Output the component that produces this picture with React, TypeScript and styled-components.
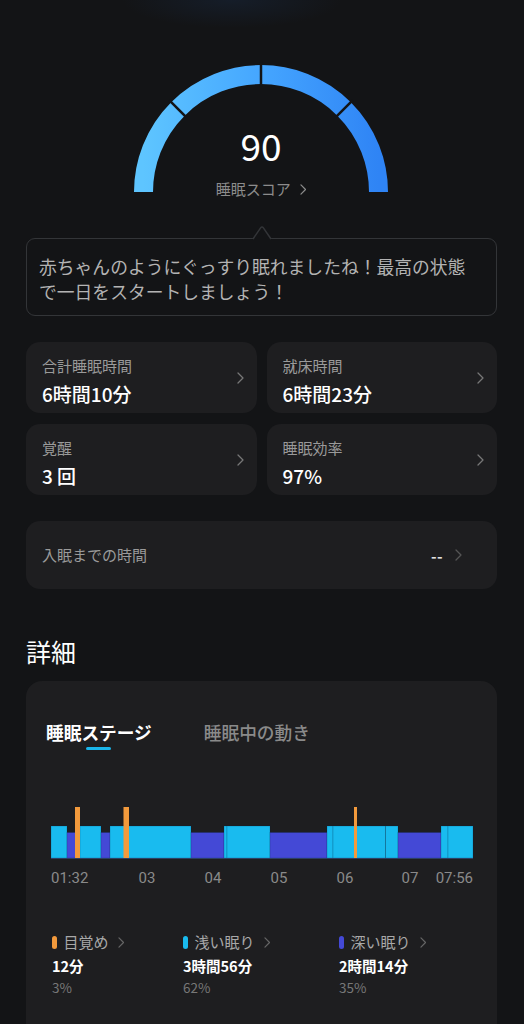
import styled, { createGlobalStyle } from "styled-components";

const GlobalStyle = createGlobalStyle`
  body {
    margin: 0;
    background: #131416;
    font-family: "Noto Sans CJK JP", "Noto Sans", sans-serif;
    color: #fff;
  }
`;

const BG = "#131416";

type Stage = "light" | "deep";

const stageColor: Record<Stage, string> = {
  light: "#19bbef",
  deep: "#4449d6",
};

// x positions in page px, chart runs 51 -> 473
const segments: { from: number; to: number; type: Stage }[] = [
  { from: 51, to: 67, type: "light" },
  { from: 67, to: 80, type: "deep" },
  { from: 80, to: 101, type: "light" },
  { from: 101, to: 110, type: "deep" },
  { from: 110, to: 191, type: "light" },
  { from: 191, to: 224, type: "deep" },
  { from: 224, to: 227, type: "light" },
  { from: 227, to: 270, type: "light" },
  { from: 270, to: 327, type: "deep" },
  { from: 327, to: 333, type: "light" },
  { from: 333, to: 385.5, type: "light" },
  { from: 385.5, to: 398, type: "light" },
  { from: 398, to: 441, type: "deep" },
  { from: 441, to: 448, type: "light" },
  { from: 448, to: 473, type: "light" },
];

const wakes = [
  { x: 75, w: 5 },
  { x: 123.5, w: 5.5 },
  { x: 354, w: 3 },
];

const ticks = [
  { x: 51, label: "01:32", anchor: "start" },
  { x: 147, label: "03", anchor: "middle" },
  { x: 213, label: "04", anchor: "middle" },
  { x: 279, label: "05", anchor: "middle" },
  { x: 345, label: "06", anchor: "middle" },
  { x: 410, label: "07", anchor: "middle" },
  { x: 473, label: "07:56", anchor: "end" },
];

const stats = [
  { label: "合計睡眠時間", value: "6時間10分" },
  { label: "就床時間", value: "6時間23分" },
  { label: "覚醒", value: "3 回" },
  { label: "睡眠効率", value: "97%" },
];

const legend = [
  { color: "#f39a3c", label: "目覚め", value: "12分", pct: "3%" },
  { color: "#19bbef", label: "浅い眠り", value: "3時間56分", pct: "62%" },
  { color: "#4449d6", label: "深い眠り", value: "2時間14分", pct: "35%" },
];

function Chevron({ color = "#777", size = 12 }: { color?: string; size?: number }) {
  return (
    <svg width={size / 2 + 1} height={size} viewBox="0 0 7 12" fill="none">
      <polyline points="1,1 6,6 1,11" stroke={color} strokeWidth="1.3" strokeLinecap="round" strokeLinejoin="round" />
    </svg>
  );
}

function Gauge() {
  const cx = 130;
  const cy = 132;
  const r = 117.5;
  const dividers = [135, 90, 45].map((deg) => {
    const a = (deg * Math.PI) / 180;
    return {
      x1: cx + (r - 12) * Math.cos(a),
      y1: cy - (r - 12) * Math.sin(a),
      x2: cx + (r + 12) * Math.cos(a),
      y2: cy - (r + 12) * Math.sin(a),
    };
  });
  return (
    <GaugeBox>
      <svg width="260" height="134" viewBox="0 0 260 134">
        <defs>
          <linearGradient id="gaugeGrad" x1="0" y1="0" x2="1" y2="0">
            <stop offset="0" stopColor="#5ec5ff" />
            <stop offset="0.5" stopColor="#45a6ff" />
            <stop offset="1" stopColor="#2f84f5" />
          </linearGradient>
        </defs>
        <path
          d={`M ${cx - r} ${cy} A ${r} ${r} 0 0 1 ${cx + r} ${cy}`}
          stroke="url(#gaugeGrad)"
          strokeWidth="19"
          fill="none"
        />
        {dividers.map((d, i) => (
          <line key={i} {...d} stroke={BG} strokeWidth="2.5" />
        ))}
      </svg>
      <ScoreValue>90</ScoreValue>
      <ScoreLabel>
        睡眠スコア
        <Chevron color="#8c8c8c" size={11} />
      </ScoreLabel>
    </GaugeBox>
  );
}

export default function App() {
  return (
    <>
      <GlobalStyle />
      <Page>
        <Gauge />

        <Bubble>
          <BubbleArrow width="20" height="14" viewBox="0 0 20 14">
            <polygon points="0,14 8.3,2 10,0 11.7,2 20,14" fill={BG} />
            <path d="M1 13 L8.6 1.9 Q10 0 11.4 1.9 L19 13" stroke="#333538" strokeWidth="1.5" fill={BG} />
          </BubbleArrow>
          赤ちゃんのようにぐっすり眠れましたね！最高の状態
          <br />
          で一日をスタートしましょう！
        </Bubble>

        <StatGrid>
          {stats.map((s) => (
            <StatCard key={s.label}>
              <StatText>
                <StatLabel>{s.label}</StatLabel>
                <StatValue>{s.value}</StatValue>
              </StatText>
              <Chevron />
            </StatCard>
          ))}
        </StatGrid>

        <RowCard>
          <StatLabel>入眠までの時間</StatLabel>
          <RowRight>
            <Dashes>--</Dashes>
            <Chevron color="#555" />
          </RowRight>
        </RowCard>

        <SectionTitle>詳細</SectionTitle>

        <DetailCard>
          <Tabs>
            <Tab $active>
              睡眠ステージ
              <TabIndicator />
            </Tab>
            <Tab>睡眠中の動き</Tab>
          </Tabs>

          <ChartSvg width="430" height="90" viewBox="46 798 430 90">
            {segments.map((s, i) => (
              <rect
                key={i}
                x={s.from}
                y={s.type === "light" ? 825 : 831.5}
                width={s.to - s.from}
                height={s.type === "light" ? 32 : 25.5}
                fill={stageColor[s.type]}
                stroke="rgba(10,40,80,0.35)"
                strokeWidth="0.6"
              />
            ))}
            <line x1="51" y1="857.5" x2="473" y2="857.5" stroke="#2c3f63" strokeWidth="1" />
            {wakes.map((w, i) => (
              <rect key={i} x={w.x} y={806} width={w.w} height={51} fill="#f39a3c" />
            ))}
            {ticks.map((t) => (
              <text
                key={t.label}
                x={t.x}
                y={882}
                textAnchor={t.anchor as "start" | "middle" | "end"}
                fill="#8a8a8a"
                fontSize="15"
                fontFamily="Roboto, sans-serif"
              >
                {t.label}
              </text>
            ))}
          </ChartSvg>

          <Legend>
            {legend.map((l) => (
              <LegendItem key={l.label}>
                <LegendHead>
                  <LegendDot $color={l.color} />
                  {l.label}
                  <Chevron color="#666" size={11} />
                </LegendHead>
                <LegendValue>{l.value}</LegendValue>
                <LegendPct>{l.pct}</LegendPct>
              </LegendItem>
            ))}
          </Legend>
        </DetailCard>
      </Page>
    </>
  );
}

const Page = styled.div`
  min-height: 1024px;
  padding: 60px 27px 0 26px;
  background:
    radial-gradient(ellipse 110px 28px at 232px 0px, rgba(24, 40, 64, 0.45), rgba(19, 20, 22, 0)),
    ${BG};
  display: flex;
  flex-direction: column;
`;

const GaugeBox = styled.div`
  position: relative;
  width: 260px;
  height: 140px;
  align-self: center;
  margin-left: -1px;
  svg {
    display: block;
  }
`;

const ScoreValue = styled.div`
  position: absolute;
  top: 64px;
  left: 0;
  right: 0;
  text-align: center;
  font-size: 37px;
  line-height: 42px;
  font-weight: 400;
  color: #fff;
`;

const ScoreLabel = styled.div`
  position: absolute;
  top: 118px;
  left: 0;
  right: 0;
  display: flex;
  justify-content: center;
  align-items: center;
  gap: 9px;
  font-size: 15px;
  line-height: 22px;
  color: #8c8c8c;
`;

const Bubble = styled.div`
  position: relative;
  margin-top: 38px;
  border: 1.5px solid #333538;
  border-radius: 9px;
  padding: 15px 10px 11px 12px;
  font-size: 17.8px;
  line-height: 25px;
  color: #b3b3b3;
  white-space: nowrap;
`;

const BubbleArrow = styled.svg`
  position: absolute;
  top: -13px;
  left: 225px;
  display: block;
`;

const StatGrid = styled.div`
  margin-top: 26px;
  display: grid;
  grid-template-columns: 1fr 1fr;
  gap: 11px 10px;
`;

const StatCard = styled.div`
  height: 71px;
  box-sizing: border-box;
  border-radius: 14px;
  background: #1e1e20;
  padding: 0 13px 0 16px;
  display: flex;
  align-items: center;
  justify-content: space-between;
`;

const StatText = styled.div`
  align-self: flex-start;
  padding-top: 14px;
  display: flex;
  flex-direction: column;
`;

const StatLabel = styled.div`
  font-size: 15px;
  line-height: 20px;
  color: #9a9a9a;
`;

const StatValue = styled.div`
  margin-top: 6px;
  font-size: 19px;
  line-height: 24px;
  font-weight: 500;
  color: #fff;
`;

const RowCard = styled.div`
  margin-top: 26px;
  height: 68px;
  box-sizing: border-box;
  border-radius: 14px;
  background: #1e1e20;
  padding: 0 35px 0 16px;
  display: flex;
  align-items: center;
  justify-content: space-between;
`;

const RowRight = styled.div`
  display: flex;
  align-items: center;
  gap: 12px;
`;

const Dashes = styled.span`
  font-size: 15px;
  font-weight: 700;
  color: #e0e0e0;
  letter-spacing: 0.5px;
`;

const SectionTitle = styled.h2`
  margin: 47px 0 0;
  font-size: 25px;
  line-height: 30px;
  font-weight: 400;
  color: #fff;
`;

const DetailCard = styled.div`
  margin-top: 15px;
  border-radius: 16px;
  background: #1e1e20;
  padding: 39px 20px 60px;
  display: flex;
  flex-direction: column;
`;

const Tabs = styled.div`
  display: flex;
  align-items: flex-start;
  gap: 52px;
`;

const Tab = styled.div<{ $active?: boolean }>`
  display: flex;
  flex-direction: column;
  align-items: center;
  font-size: 17.7px;
  line-height: 24px;
  font-weight: ${(p) => (p.$active ? 700 : 500)};
  color: ${(p) => (p.$active ? "#fff" : "#8a8a8a")};
`;

const TabIndicator = styled.span`
  margin-top: 3px;
  width: 25px;
  height: 3px;
  border-radius: 2px;
  background: #1ab5ea;
`;

const ChartSvg = styled.svg`
  display: block;
  margin-top: 49px;
`;

const Legend = styled.div`
  margin-top: 43px;
  padding-left: 6px;
  display: grid;
  grid-template-columns: 131px 156px 1fr;
`;

const LegendItem = styled.div`
  display: flex;
  flex-direction: column;
`;

const LegendHead = styled.div`
  display: flex;
  align-items: center;
  font-size: 15px;
  line-height: 20px;
  color: #a8a8a8;
  svg {
    margin-left: 9px;
  }
`;

const LegendDot = styled.span<{ $color: string }>`
  width: 4.5px;
  height: 13px;
  border-radius: 3px;
  margin-right: 7px;
  background: ${(p) => p.$color};
`;

const LegendValue = styled.div`
  margin-top: 4px;
  font-size: 14.5px;
  line-height: 20px;
  font-weight: 700;
  color: #fff;
`;

const LegendPct = styled.div`
  margin-top: 1px;
  font-size: 13.5px;
  line-height: 20px;
  color: #777;
`;
